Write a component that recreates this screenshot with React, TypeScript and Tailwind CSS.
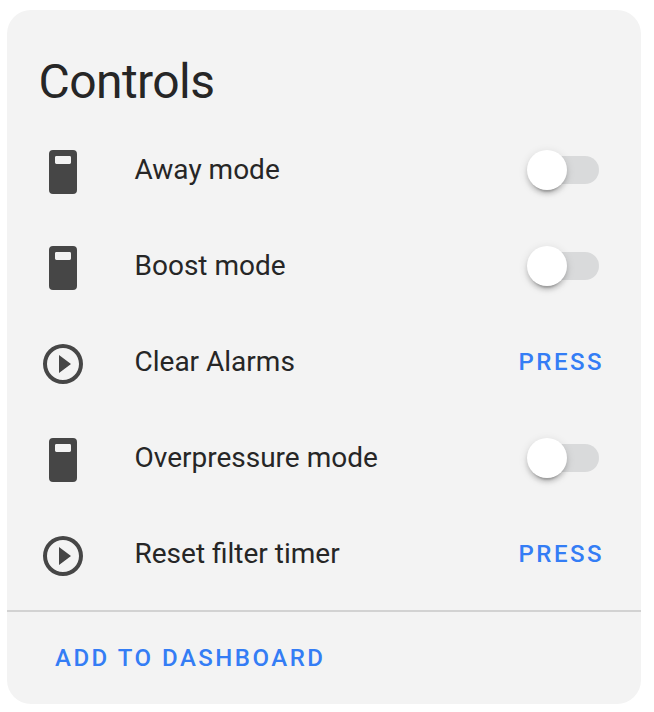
const DeviceIcon = () => (
  <svg width="48" height="48" viewBox="0 0 24 24" className="shrink-0 fill-[#464646]">
    <path fillRule="evenodd" d="M7 1h10a2 2 0 0 1 2 2v18a2 2 0 0 1-2 2H7a2 2 0 0 1-2-2V3a2 2 0 0 1 2-2zM8.7 4a.7.7 0 0 0-.7.7v2.6a.7.7 0 0 0 .7.7h6.6a.7.7 0 0 0 .7-.7V4.700a.7.7 0 0 0-.7-.7H8.7z" />
  </svg>
);

const PlayIcon = () => (
  <svg width="48" height="48" viewBox="0 0 24 24" className="shrink-0 fill-[#464646]">
    <path d="M12 20c-4.41 0-8-3.59-8-8s3.59-8 8-8 8 3.59 8 8-3.59 8-8 8m0-18A10 10 0 0 0 2 12a10 10 0 0 0 10 10 10 10 0 0 0 10-10A10 10 0 0 0 12 2m-2 14.5 6-4.5-6-4.5v9z" />
  </svg>
);

const Toggle = () => (
  <button className="relative mr-[42px] mb-1 h-7 w-[68px] rounded-full bg-[#d9dadb]" aria-label="Toggle">
    <span className="absolute -left-1 -top-1.5 size-10 rounded-full bg-white shadow-[0_6px_2px_-4px_rgba(0,0,0,0.2),0_4px_4px_rgba(0,0,0,0.14),0_2px_10px_rgba(0,0,0,0.12)]" />
  </button>
);

const rows = [
  { name: "Away mode", press: false },
  { name: "Boost mode", press: false },
  { name: "Clear Alarms", press: true },
  { name: "Overpressure mode", press: false },
  { name: "Reset filter timer", press: true },
];

export default function App() {
  return (
    <div className="h-[712px] bg-white pl-[7px] pt-[10px] font-['Roboto',sans-serif] text-[#262626]">
      <section className="flex h-[694px] w-[634px] flex-col rounded-[24px] bg-[#f3f3f3]">
        <h1 className="h-[114px] pl-[31.5px] pt-[40px] text-[48px] leading-[64px] tracking-[-0.012em]">Controls</h1>
        <div className="h-[486px]">
          {rows.map((row) => (
            <div key={row.name} className="flex h-24 items-center pl-8">
              {row.press ? <PlayIcon /> : <DeviceIcon />}
              <span className="mb-1 ml-[47.5px] flex-1 text-[28px] leading-10">{row.name}</span>
              {row.press ? (
                <button className="mb-1 mr-[37px] text-[24px] font-medium tracking-[2.5px] text-[#347df5]">PRESS</button>
              ) : (
                <Toggle />
              )}
            </div>
          ))}
        </div>
        <footer className="flex flex-1 items-center border-t-2 border-[#d2d2d2] pl-12">
          <button className="text-[24px] font-medium tracking-[2.5px] text-[#347df5]">ADD TO DASHBOARD</button>
        </footer>
      </section>
    </div>
  );
}
